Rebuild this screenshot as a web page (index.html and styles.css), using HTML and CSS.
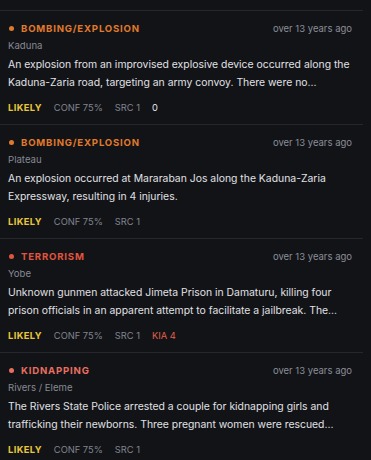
FILE: index.html
```html
<!DOCTYPE html>
<html>
<head>
<meta charset="utf-8">
<link rel="stylesheet" href="styles.css">
</head>
<body>
<div class="list">
  <div class="card">
    <div class="head">
      <span class="cat orange"><span class="dot"></span>BOMBING/EXPLOSION</span>
      <span class="date">over 13 years ago</span>
    </div>
    <div class="loc">Kaduna</div>
    <p class="desc">An explosion from an improvised explosive device occurred along the Kaduna-Zaria road, targeting an army convoy. There were no…</p>
    <div class="meta"><span class="likely">LIKELY</span><span>CONF 75%</span><span>SRC 1</span><span class="white">0</span></div>
  </div>
  <div class="card">
    <div class="head">
      <span class="cat orange"><span class="dot"></span>BOMBING/EXPLOSION</span>
      <span class="date">over 13 years ago</span>
    </div>
    <div class="loc">Plateau</div>
    <p class="desc">An explosion occurred at Mararaban Jos along the Kaduna-Zaria Expressway, resulting in 4 injuries.</p>
    <div class="meta"><span class="likely">LIKELY</span><span>CONF 75%</span><span>SRC 1</span></div>
  </div>
  <div class="card">
    <div class="head">
      <span class="cat red"><span class="dot"></span>TERRORISM</span>
      <span class="date">over 13 years ago</span>
    </div>
    <div class="loc">Yobe</div>
    <p class="desc">Unknown gunmen attacked Jimeta Prison in Damaturu, killing four prison officials in an apparent attempt to facilitate a jailbreak. The…</p>
    <div class="meta"><span class="likely">LIKELY</span><span>CONF 75%</span><span>SRC 1</span><span class="kia">KIA 4</span></div>
  </div>
  <div class="card">
    <div class="head">
      <span class="cat salmon"><span class="dot"></span>KIDNAPPING</span>
      <span class="date">over 13 years ago</span>
    </div>
    <div class="loc">Rivers / Eleme</div>
    <p class="desc">The Rivers State Police arrested a couple for kidnapping girls and trafficking their newborns. Three pregnant women were rescued…</p>
    <div class="meta"><span class="likely">LIKELY</span><span>CONF 75%</span><span>SRC 1</span></div>
  </div>
</div>
</body>
</html>
```
FILE: styles.css
```css
html, body {
  margin: 0;
  padding: 0;
  background: #121317;
  height: 100%;
  overflow: hidden;
}
body {
  font-family: Inter, "Noto Sans", sans-serif;
  color: #e2e3e7;
}
.list {
  width: 363px;
  padding-top: 10px;
}
.card {
  border-top: 1px solid #25272d;
  padding: 10px 11px 10.5px 8px;
}
.head {
  display: flex;
  justify-content: space-between;
  align-items: center;
  height: 14px;
}
.cat {
  display: flex;
  align-items: center;
  font-size: 9.6px;
  font-weight: 700;
  letter-spacing: 0.8px;
}
.dot {
  width: 5px;
  height: 5px;
  border-radius: 50%;
  background: currentColor;
  margin: 0 7px 0 1px;
}
.orange { color: #e07a2c; }
.red { color: #e0553f; }
.salmon { color: #e8705f; }
.date {
  font-size: 9.5px;
  color: #8b8e97;
}
.loc {
  font-size: 9.6px;
  color: #868993;
  margin-top: 3.5px;
  line-height: 13px;
}
.desc {
  margin: 4.25px 0 0;
  font-size: 10.4px;
  line-height: 18.5px;
  color: #e0e1e5;
  height: 37px;
}
.meta {
  display: flex;
  gap: 12px;
  margin-top: 7.75px;
  font-size: 9.3px;
  color: #81848e;
  line-height: 13px;
}
.likely { color: #e8c63b; font-weight: 700; letter-spacing: 0.4px; }
.white { color: #e4e5e9; }
.kia { color: #e0604a; }
```
